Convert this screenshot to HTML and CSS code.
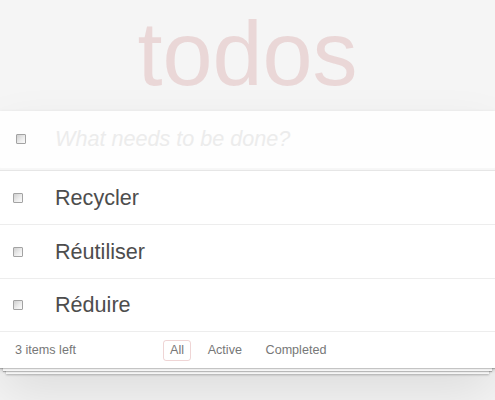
FILE: index.html
```html
<!DOCTYPE html>
<html lang="fr">
<head>
<meta charset="utf-8">
<title>todos</title>
<link rel="stylesheet" href="styles.css">
</head>
<body>
<section class="page">
  <h1 class="title">todos</h1>
  <section class="todoapp">
    <header class="new-row">
      <input type="checkbox" class="check toggle-all">
      <input class="new-todo" placeholder="What needs to be done?">
    </header>
    <ul class="list">
      <li class="item"><input type="checkbox" class="check"><label class="label">Recycler</label></li>
      <li class="item"><input type="checkbox" class="check"><label class="label">Réutiliser</label></li>
      <li class="item"><input type="checkbox" class="check"><label class="label">Réduire</label></li>
    </ul>
    <footer class="footer">
      <span class="count">3 items left</span>
      <ul class="filters">
        <li><a class="filter selected">All</a></li>
        <li><a class="filter">Active</a></li>
        <li><a class="filter">Completed</a></li>
      </ul>
      <span class="spacer"></span>
    </footer>
  </section>
</section>
</body>
</html>
```
FILE: styles.css
```css
html, body {
  margin: 0;
  padding: 0;
}
body {
  background: #f5f5f5;
  font-family: "Liberation Sans", Arial, Helvetica, sans-serif;
  color: #4d4d4d;
  min-height: 400px;
  overflow: hidden;
}
.page {
  display: flex;
  flex-direction: column;
}
.title {
  margin: 9px 0 12px;
  height: 90px;
  line-height: 90px;
  font-size: 90px;
  font-weight: 100;
  text-align: center;
  color: rgba(175, 47, 47, 0.15);
}
.todoapp {
  background: #fff;
  box-shadow: 0 2px 4px rgba(0, 0, 0, 0.2), 0 25px 50px rgba(0, 0, 0, 0.1);
}
.new-row {
  display: flex;
  align-items: center;
  height: 60px;
  padding: 0 0 3px 16px;
  box-sizing: border-box;
  border-bottom: 1px solid #e6e6e6;
  background: rgba(0, 0, 0, 0.003);
  box-shadow: inset 0 -2px 1px rgba(0, 0, 0, 0.03);
}
.check {
  -webkit-appearance: none;
  appearance: none;
  width: 10px;
  height: 10px;
  margin: 0;
  flex: none;
  box-sizing: border-box;
  border: 1px solid #a3a3a3;
  border-radius: 1px;
  background: linear-gradient(135deg, #cfcfcf 0%, #eeeeee 60%, #fbfbfb 100%);
}
.new-todo {
  margin-left: 29px;
  flex: 1;
  min-width: 0;
  border: none;
  outline: none;
  padding: 0;
  background: transparent;
  font-family: "Liberation Sans", Arial, Helvetica, sans-serif;
  font-size: 21.6px;
  color: #4d4d4d;
}
.new-todo::placeholder {
  font-style: italic;
  color: #ececec;
}
.list {
  list-style: none;
  margin: 0;
  padding: 0;
}
.item {
  display: flex;
  align-items: center;
  height: 54px;
  box-sizing: border-box;
  padding-left: 13px;
  border-bottom: 1px solid #ededed;
}
.item:last-child {
  height: 53px;
}
.label {
  margin-left: 32px;
  font-size: 21.6px;
  color: #4d4d4d;
}
.footer {
  display: grid;
  grid-template-columns: 1fr auto 1fr;
  align-items: center;
  height: 36px;
  padding: 0 13.5px 0 15px;
  box-sizing: border-box;
  font-size: 12.6px;
  color: #777;
  box-shadow: 0 1px 1px rgba(0, 0, 0, 0.2),
    0 6px 0 -3px #f6f6f6,
    0 7px 1px -3px rgba(0, 0, 0, 0.25),
    0 12px 0 -6px #f6f6f6,
    0 13px 2px -6px rgba(0, 0, 0, 0.25);
}
.count {
  justify-self: start;
}
.filters {
  list-style: none;
  margin: 0;
  padding: 0;
  display: flex;
  gap: 9px;
}
.filter {
  display: block;
  padding: 2px 6.3px 3px;
  border: 1px solid transparent;
  border-radius: 3px;
  color: #777;
}
.filter.selected {
  border-color: rgba(175, 47, 47, 0.2);
}
```
